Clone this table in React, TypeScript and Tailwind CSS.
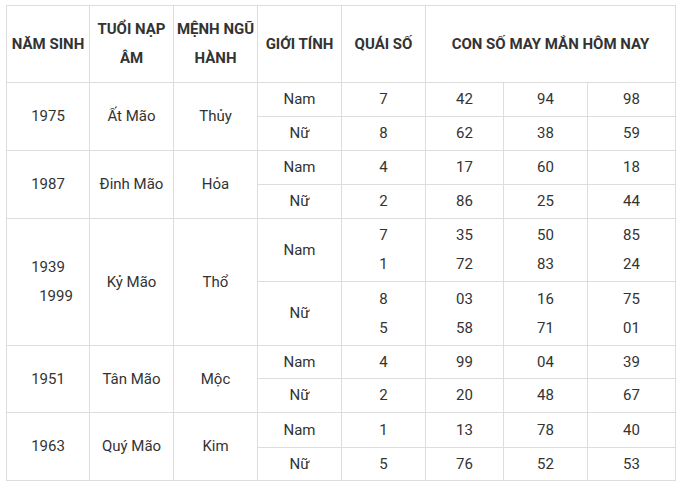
import React from "react";

type Row = {
  year: React.ReactNode;
  tuoi: string;
  menh: string;
  sub: { g: string; q: React.ReactNode; n: React.ReactNode[]; h: string }[];
};

const two = (a: string, b: string) => (
  <>
    <div>{a}</div>
    <div>{b}</div>
  </>
);

const rows: Row[] = [
  {
    year: "1975",
    tuoi: "Ất Mão",
    menh: "Thủy",
    sub: [
      { g: "Nam", q: "7", n: ["42", "94", "98"], h: "h-[34px]" },
      { g: "Nữ", q: "8", n: ["62", "38", "59"], h: "h-[34px]" },
    ],
  },
  {
    year: "1987",
    tuoi: "Đinh Mão",
    menh: "Hỏa",
    sub: [
      { g: "Nam", q: "4", n: ["17", "60", "18"], h: "h-[34px]" },
      { g: "Nữ", q: "2", n: ["86", "25", "44"], h: "h-[34px]" },
    ],
  },
  {
    year: (
      <>
        <div>1939</div>
        <div className="pl-4">1999</div>
      </>
    ),
    tuoi: "Kỷ Mão",
    menh: "Thổ",
    sub: [
      {
        g: "Nam",
        q: two("7", "1"),
        n: [two("35", "72"), two("50", "83"), two("85", "24")],
        h: "h-[63px]",
      },
      {
        g: "Nữ",
        q: two("8", "5"),
        n: [two("03", "58"), two("16", "71"), two("75", "01")],
        h: "h-[64px]",
      },
    ],
  },
  {
    year: "1951",
    tuoi: "Tân Mão",
    menh: "Mộc",
    sub: [
      { g: "Nam", q: "4", n: ["99", "04", "39"], h: "h-[33px]" },
      { g: "Nữ", q: "2", n: ["20", "48", "67"], h: "h-[34px]" },
    ],
  },
  {
    year: "1963",
    tuoi: "Quý Mão",
    menh: "Kim",
    sub: [
      { g: "Nam", q: "1", n: ["13", "78", "40"], h: "h-[35px]" },
      { g: "Nữ", q: "5", n: ["76", "52", "53"], h: "h-[33px]" },
    ],
  },
];

const td = "border border-[#dddddd] text-center align-middle p-0";

export default function App() {
  return (
    <div
      className="w-[681px] h-[487px] bg-white pt-[5px] pl-[6px]"
      style={{ fontFamily: "Roboto, 'Liberation Sans', sans-serif" }}
    >
      <table className="border-collapse table-fixed w-[669px] text-[15px] leading-[29px] text-[#333333]">
        <colgroup>
          <col className="w-[83px]" />
          <col className="w-[84px]" />
          <col className="w-[84px]" />
          <col className="w-[84px]" />
          <col className="w-[84px]" />
          <col className="w-[78px]" />
          <col className="w-[84px]" />
          <col className="w-[88px]" />
        </colgroup>
        <thead>
          <tr className="h-[77px] font-bold text-[#333333]">
            <th className={td}>NĂM SINH</th>
            <th className={td}>
              TUỔI NẠP
              <br />
              ÂM
            </th>
            <th className={td}>
              MỆNH NGŨ
              <br />
              HÀNH
            </th>
            <th className={td}>GIỚI TÍNH</th>
            <th className={td}>QUÁI SỐ</th>
            <th className={td} colSpan={3}>
              CON SỐ MAY MẮN HÔM NAY
            </th>
          </tr>
        </thead>
        <tbody>
          {rows.map((r, i) =>
            r.sub.map((s, j) => (
              <tr key={`${i}-${j}`} className={s.h}>
                {j === 0 && (
                  <>
                    <td className={td} rowSpan={2}>
                      {r.year}
                    </td>
                    <td className={td} rowSpan={2}>
                      {r.tuoi}
                    </td>
                    <td className={td} rowSpan={2}>
                      {r.menh}
                    </td>
                  </>
                )}
                <td className={td}>{s.g}</td>
                <td className={td}>{s.q}</td>
                {s.n.map((n, k) => (
                  <td key={k} className={td}>
                    {n}
                  </td>
                ))}
              </tr>
            ))
          )}
        </tbody>
      </table>
    </div>
  );
}
